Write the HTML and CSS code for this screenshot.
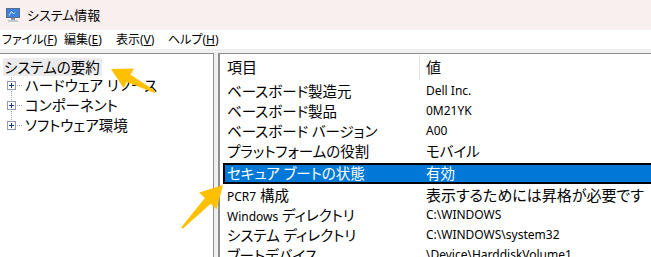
FILE: index.html
```html
<!DOCTYPE html>
<html lang="ja">
<head>
    <meta charset="UTF-8">
    <title>システム情報</title>
    <link rel="stylesheet" href="styles.css">
</head>
<body>
    <div class="app">
        <div class="titlebar">
            <svg class="app-icon" width="16" height="16" viewBox="0 0 16 16">
                <rect x="1.5" y="1.5" width="13" height="9" fill="#3f80da" stroke="#556c8e"/>
                <path d="M4 8.5 L6.5 4.5 L8.5 7 L10 5.5" stroke="#d6e8ff" fill="none"/>
                <rect x="6" y="11" width="4" height="2" fill="#8f98a3"/>
                <rect x="3" y="13" width="10" height="2" fill="#c4c9d0"/>
            </svg>
            <span>システム情報</span>
        </div>

        <div class="menubar">
            <span class="menu-item m-file">ファイル(<u>F</u>)</span>
            <span class="menu-item m-edit">編集(<u>E</u>)</span>
            <span class="menu-item m-view">表示(<u>V</u>)</span>
            <span class="menu-item">ヘルプ(<u>H</u>)</span>
        </div>

        <div class="main">
            <div class="tree-pane">
                <div class="tree-root"><span class="root-label">システムの要約</span></div>
                <div class="tree-children">
                    <div class="tree-node"><span class="expander"></span><span class="hline"></span><span>ハードウェア リソース</span></div>
                    <div class="tree-node"><span class="expander"></span><span class="hline"></span><span>コンポーネント</span></div>
                    <div class="tree-node"><span class="expander"></span><span class="hline"></span><span>ソフトウェア環境</span></div>
                </div>
            </div>

            <div class="list-pane">
                <div class="list-header">
                    <div class="col-name">項目</div>
                    <div class="col-value">値</div>
                </div>
                <div class="list-row"><div>ベースボード製造元</div><div class="lat">Dell Inc.</div></div>
                <div class="list-row"><div>ベースボード製品</div><div class="lat">0M21YK</div></div>
                <div class="list-row"><div>ベースボード バージョン</div><div class="lat">A00</div></div>
                <div class="list-row"><div>プラットフォームの役割</div><div>モバイル</div></div>
                <div class="list-row selected"><div>セキュア ブートの状態</div><div>有効</div></div>
                <div class="list-row"><div><span class="lat">PCR7</span> 構成</div><div class="wide">表示するためには昇格が必要です</div></div>
                <div class="list-row"><div><span class="lat">Windows</span> ディレクトリ</div><div class="lat">C:\WINDOWS</div></div>
                <div class="list-row"><div>システム ディレクトリ</div><div class="lat">C:\WINDOWS\system32</div></div>
                <div class="list-row"><div>ブートデバイス</div><div class="lat">\Device\HarddiskVolume1</div></div>
            </div>
        </div>
    </div>

    <!-- annotation arrows drawn over the screenshot -->
    <svg class="annotations" width="651" height="257" viewBox="0 0 651 257">
        <polygon fill="#ffc000" points="111,69 133.8,68.5 130.6,74.8 155.5,91.1 154.5,92.9 126.8,81.9 123.6,88.1"/>
        <polygon fill="#ffc000" points="223,185 216.5,209.2 210.7,203.7 182.7,228.7 181.3,227.3 204.9,198.1 199.1,192.6"/>
    </svg>
</body>
</html>
```

FILE: styles.css
```css
body {
    margin: 0;
    padding: 0;
    width: 651px;
    height: 257px;
    overflow: hidden;
    position: relative;
    background-color: #f0f0f0;
    font-family: "Noto Sans", "Noto Sans CJK JP", sans-serif;
    font-feature-settings: "palt";
    color: #000;
}
.app {
    display: flex;
    flex-direction: column;
    height: 257px;
}
.titlebar {
    height: 30px;
    flex-shrink: 0;
    background-color: #f9efee;
    display: flex;
    align-items: center;
    gap: 6px;
    padding-left: 5px;
    font-size: 13px;
    line-height: 16px;
}
.menubar {
    height: 19px;
    flex-shrink: 0;
    background-color: #fff;
    display: flex;
    align-items: center;
    padding-left: 2px;
    font-size: 12px;
    line-height: 16px;
}
.menu-item u {
    text-decoration-thickness: 1px;
}
.m-file {
    width: 62px;
}
.m-edit, .m-view {
    width: 52px;
}
.main {
    flex: 1;
    min-height: 0;
    display: flex;
    gap: 4px;
    padding-top: 4px;
    background-color: #f0f0f0;
}
.tree-pane {
    width: 213px;
    flex-shrink: 0;
    background-color: #fff;
    border-top: 1px solid #8e8e8e;
    border-right: 1px solid #8e8e8e;
    padding-top: 3px;
    font-size: 14.5px;
    line-height: 20px;
}
.tree-root {
    height: 18px;
    padding-left: 3px;
}
.root-label {
    display: inline-block;
    height: 18px;
    line-height: 18px;
    padding: 0 2px 0 1px;
    background-color: #ebebeb;
}
.tree-children {
    margin-left: 7px;
    background-image: repeating-linear-gradient(to bottom, #9a9a9a 0 1px, transparent 1px 2px);
    background-size: 1px 47px;
    background-position: 4px 0;
    background-repeat: no-repeat;
}
.tree-node {
    height: 20px;
    display: flex;
    align-items: center;
}
.expander {
    width: 7px;
    height: 7px;
    border: 1px solid #8f9cb0;
    background-color: #fff;
    background-image:
        linear-gradient(#1f3b94, #1f3b94),
        linear-gradient(#1f3b94, #1f3b94);
    background-size: 5px 1px, 1px 5px;
    background-position: center, center;
    background-repeat: no-repeat;
}
.hline {
    width: 6px;
    height: 1px;
    margin-right: 3px;
    background-image: repeating-linear-gradient(to right, #9a9a9a 0 1px, transparent 1px 2px);
    background-position: 1px 0;
}
.list-pane {
    flex: 1;
    min-width: 0;
    background-color: #fff;
    border-top: 1px solid #8e8e8e;
    border-left: 2px solid #8e8e8e;
    font-size: 14.5px;
}
.list-header {
    height: 27px;
    display: grid;
    grid-template-columns: 192px 1fr;
    margin-left: 3px;
    padding-left: 4px;
    font-size: 15px;
    line-height: 27px;
}
.list-header .col-value {
    border-left: 1px solid #e3e3e3;
    padding-left: 6px;
    margin: 1px 0 1px;
    line-height: 25px;
}
.list-row {
    height: 20px;
    display: grid;
    grid-template-columns: 199px 1fr;
    margin-left: 3px;
    padding-left: 4px;
    line-height: 20px;
    white-space: nowrap;
}
.list-row.selected {
    height: 17px;
    line-height: 17px;
    margin-top: 2px;
    margin-bottom: 1px;
    padding-left: 2px;
    border: 2px solid #000;
    border-right: none;
    background-color: #0078d7;
    color: #fff;
}
.list-row .wide {
    font-size: 15px;
}
.lat {
    font-size: 12px;
}
.annotations {
    position: absolute;
    top: 0;
    left: 0;
    pointer-events: none;
}
```
